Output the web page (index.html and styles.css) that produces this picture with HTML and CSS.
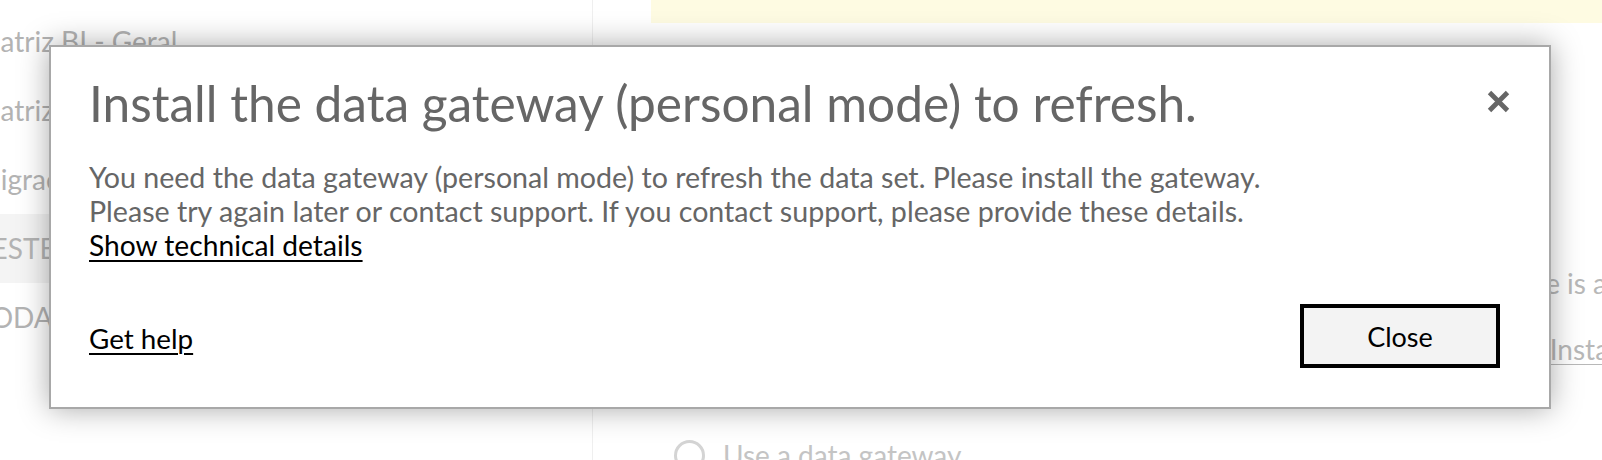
FILE: index.html
```html
<!DOCTYPE html>
<html lang="en">
<head>
<meta charset="utf-8">
<title>Install the data gateway</title>
<link rel="stylesheet" href="styles.css">
</head>
<body>
<div class="page">
  <aside class="side">
    <ul class="side-list">
      <li class="side-item">Matriz BI - Geral</li>
      <li class="side-item">Matriz BI - Comercial</li>
      <li class="side-item">Migração de dados</li>
      <li class="side-item side-item--active">TESTE</li>
      <li class="side-item">TODAS AS LOJAS</li>
    </ul>
  </aside>
  <main class="main">
    <div class="banner"></div>
    <div class="content">
      <p class="note note--first">You can't schedule refresh for this dataset now because the gateway type is a personal one.</p>
      <p class="note note--second">Download and set up the personal gateway to refresh all of your data. <span class="note-link">Install now</span></p>
      <div class="radio-row">
        <span class="radio"></span>
        <span class="radio-label">Use a data gateway</span>
      </div>
    </div>
  </main>
</div>

<div class="dialog" role="dialog" aria-labelledby="dlg-title">
  <div class="dialog-header">
    <h1 class="dialog-title" id="dlg-title">Install the data gateway (personal mode) to refresh.</h1>
    <button class="dialog-x" type="button" aria-label="Close">
      <svg width="23" height="23" viewBox="0 0 23 23" aria-hidden="true">
        <path d="M2.5 2.5 L20.5 20.5 M20.5 2.5 L2.5 20.5" stroke="#666666" stroke-width="4.8" fill="none"/>
      </svg>
    </button>
  </div>
  <div class="dialog-body">
    <p class="dialog-line">You need the data gateway (personal mode) to refresh the data set. Please install the gateway.</p>
    <p class="dialog-line">Please try again later or contact support. If you contact support, please provide these details.</p>
    <a class="dialog-link" href="#">Show technical details</a>
  </div>
  <div class="dialog-footer">
    <a class="dialog-link dialog-link--help" href="#">Get help</a>
    <button class="dialog-btn" type="button">Close</button>
  </div>
</div>
</body>
</html>
```

FILE: styles.css
```css
* { box-sizing: border-box; }

html, body {
  margin: 0;
  padding: 0;
  background: #ffffff;
}

body {
  width: 1602px;
  height: 460px;
  overflow: hidden;
  font-family: "Lato", "Open Sans", sans-serif;
  position: relative;
}

.page {
  display: flex;
  height: 460px;
}

/* background left panel */
.side {
  width: 593px;
  flex: none;
  border-right: 1px solid #efefef;
  overflow: hidden;
  padding-top: 7px;
}

.side-list {
  list-style: none;
  margin: 0;
  padding: 0;
}

.side-item {
  height: 69px;
  line-height: 69px;
  font-size: 28px;
  color: #b3b3b3;
  white-space: nowrap;
  text-indent: -25px;
}

.side-item--active {
  background: #f4f4f4;
}

/* background main area */
.main {
  flex: 1;
  min-width: 0;
  overflow: hidden;
}

.banner {
  margin-left: 58px;
  height: 23px;
  background: #fefbe2;
}

.content {
  padding-left: 81px;
  padding-top: 240px;
}

.note {
  margin: 0;
  height: 66px;
  line-height: 40px;
  font-size: 28px;
  color: #b8b8b8;
  white-space: nowrap;
}

.note--first {
  text-indent: -12px;
}

.note--second {
  text-indent: 17px;
}

.note-link {
  text-decoration: underline;
  text-decoration-thickness: 1px;
  text-underline-offset: 4px;
}

.radio-row {
  display: flex;
  align-items: flex-start;
  gap: 18px;
  margin-top: 45px;
}

.radio {
  width: 31px;
  height: 31px;
  border: 3px solid #d4d4d4;
  border-radius: 50%;
  flex: none;
}

.radio-label {
  font-size: 28px;
  line-height: 31px;
  color: #c4c4c4;
}

/* dialog */
.dialog {
  position: absolute;
  left: 49px;
  top: 45px;
  width: 1502px;
  height: 364px;
  background: #ffffff;
  border: 2px solid #a8a8a8;
  box-shadow: 0 0 28px rgba(0, 0, 0, 0.34);
  padding: 28px 39px 0 38px;
  display: flex;
  flex-direction: column;
}

.dialog-header {
  display: flex;
  justify-content: space-between;
  align-items: flex-start;
}

.dialog-title {
  margin: 0;
  font-size: 49.6px;
  line-height: 56px;
  font-weight: 400;
  color: #666666;
}

.dialog-x {
  margin: 15px 0 0 0;
  padding: 0;
  border: 0;
  background: none;
  width: 23px;
  height: 23px;
  display: flex;
}

.dialog-body {
  margin-top: 29px;
  font-size: 28.6px;
  line-height: 34px;
  color: #666666;
}

.dialog-line {
  margin: 0;
}

.dialog-link {
  color: #000000;
  text-decoration: underline;
  text-decoration-thickness: 2px;
  text-underline-offset: 4px;
}

.dialog-body .dialog-link {
  display: block;
  width: max-content;
  font-size: 28.2px;
}

.dialog-footer {
  margin-top: 42px;
  margin-right: 10px;
  display: flex;
  justify-content: space-between;
  align-items: center;
  font-size: 27.8px;
  line-height: 33px;
}

.dialog-link--help {
  margin-top: 5px;
}

.dialog-btn {
  width: 200px;
  height: 64px;
  border: 4px solid #000000;
  background: #f3f3f3;
  font-family: "Lato", "Open Sans", sans-serif;
  font-size: 27px;
  color: #000000;
  padding: 0;
}
```
